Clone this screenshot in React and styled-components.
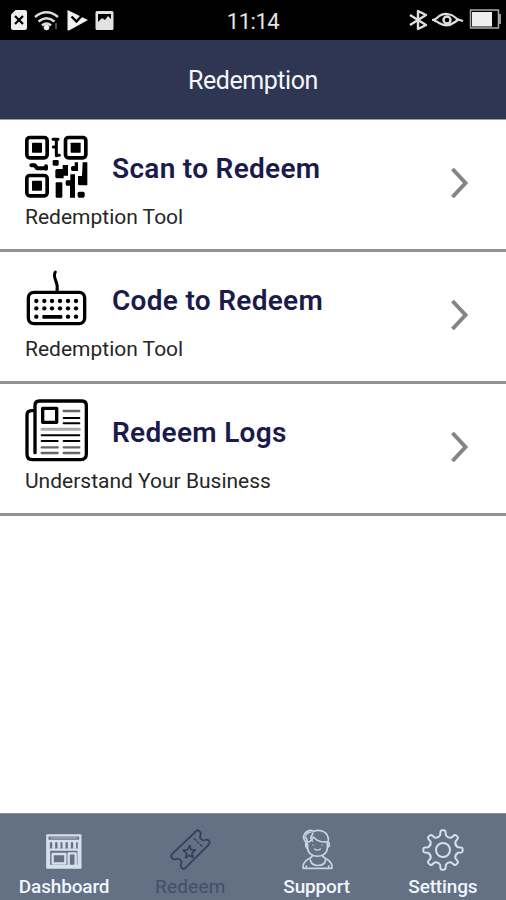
import styled, { createGlobalStyle, ThemeProvider } from 'styled-components'

const theme = {
    font: "Roboto, 'Liberation Sans', sans-serif",
    colors: {
        navy: '#2f3653',
        title: '#1a1b4b',
        tabBar: '#647083',
        tabIcon: '#d5dfed',
        tabActive: '#344060',
        line: '#929294'
    }
}

const GlobalStyle = createGlobalStyle`
    * {
        box-sizing: border-box;
    }

    body {
        margin: 0;
        background-color: #fff;
        font-family: ${theme.font};
    }
`

const Screen = styled.div`
    height: 100vh;
    min-height: 900px;
    display: flex;
    flex-direction: column;
    background-color: #fff;
`

const StatusBar = styled.div`
    height: 40px;
    flex: none;
    display: grid;
    grid-template-columns: 1fr auto 1fr;
    background-color: #000;
    color: #e4e4e4;
`

const StatusIcons = styled.svg`
    display: block;
    height: 40px;
    justify-self: ${({ $end }) => ($end ? 'end' : 'start')};
`

const Clock = styled.span`
    font-size: 22px;
    line-height: 43px;
    letter-spacing: -0.5px;
`

const Header = styled.header`
    height: 80px;
    flex: none;
    padding-top: 1px;
    background-color: ${({ theme }) => theme.colors.navy};
    border-bottom: 1px solid #9a9dab;
    text-align: center;
`

const HeaderTitle = styled.h1`
    margin: 0;
    color: #f4f6fc;
    font-size: 25px;
    font-weight: 400;
    line-height: 80px;
    letter-spacing: -0.45px;
`

const List = styled.main`
    flex: 1;
`

const Row = styled.section`
    height: 132px;
    display: flex;
    align-items: center;
    padding: 0 36px 0 25px;
    border-bottom: 3px solid ${({ theme }) => theme.colors.line};
`

const RowBody = styled.div`
    flex: 1;
    align-self: stretch;
    padding-top: 15px;
`

const RowHeading = styled.div`
    height: 64px;
    display: flex;
    gap: 23px;
`

const RowIcon = styled.svg`
    width: 64px;
    height: 64px;
    flex: none;
`

const RowTitle = styled.h2`
    margin: 0;
    color: ${({ theme }) => theme.colors.title};
    font-size: 28px;
    font-weight: 600;
    line-height: 68px;
    letter-spacing: 0.3px;
    white-space: nowrap;
`

const RowText = styled.p`
    margin: 3px 0 0;
    color: #262626;
    font-size: 21px;
    line-height: 30px;
`

const Arrow = styled.svg`
    width: 20px;
    height: 36px;
    margin-bottom: 3px;
`

const TabBar = styled.nav`
    height: 87px;
    flex: none;
    display: grid;
    grid-template-columns: repeat(4, 1fr);
    padding-left: 1px;
    background-color: ${({ theme }) => theme.colors.tabBar};
    border-top: 1px solid #8a919c;
`

const Tab = styled.div`
    display: flex;
    flex-direction: column;
    align-items: center;
    padding-top: 14px;
    color: ${({ $active, theme }) => ($active ? theme.colors.tabActive : theme.colors.tabIcon)};
`

const TabIcon = styled.svg`
    width: 44px;
    height: 44px;
    fill: none;
    stroke: currentColor;
    stroke-linecap: round;
    stroke-linejoin: round;
`

const TabLabel = styled.span`
    color: ${({ $active }) => ($active ? '#434e69' : '#f0f5fd')};
    font-size: 19px;
    line-height: 30px;
    letter-spacing: ${({ $active }) => ($active ? '0.2px' : '-0.15px')};
    font-weight: ${({ $active }) => ($active ? 400 : 500)};
`

const Finder = ({ x, y }) => (
    <g>
        <rect x={x + 5.5} y={y + 5.5} width="61" height="61" rx="9" fill="none" stroke="#000" strokeWidth="11" />
        <rect x={x + 21} y={y + 21} width="30" height="30" rx="2" />
    </g>
)

const QrIcon = () => (
    <RowIcon viewBox="30 30 192 192">
        <Finder x={30} y={32} />
        <Finder x={146} y={32} />
        <Finder x={30} y={146} />
        <g stroke="#000" strokeLinejoin="round" strokeLinecap="round" fill="none">
            <path strokeWidth="9" d="M114 43h15M124 43v49M115 66h8M124 91h9" />
            <path strokeWidth="12" d="M49 121h10l8 9h26M93 124v7" />
        </g>
        <rect x="113" y="105" width="18" height="17" rx="4" />
        <path d="M143 120h16v32h-13v8h-20q-5 0-5-5v-18q0-5 5-5h17z" />
        <path d="M179 112h10v26h-16q-5 0-5-5v-5q0-5 5-5h6z" />
        <path d="M203 112h14v69h-24q-4 0-4-4v-24h12z" />
        <rect x="122" y="172" width="20" height="46" rx="3" />
        <path d="M166 148h14v70h-15v-36h-9q-4 0-4-4v-8q0-4 4-4h10z" />
        <rect x="188" y="200" width="21" height="18" rx="5" />
    </RowIcon>
)

const KeyboardIcon = () => (
    <RowIcon viewBox="30 15 192 192">
        <rect x="40" y="91" width="169" height="94" rx="17" fill="none" stroke="#000" strokeWidth="10" />
        <path d="M121 30c-11 18 11 27 5 57" fill="none" stroke="#000" strokeWidth="9" strokeLinecap="round" />
        {[117, 139].map(y => [64, 88, 111, 135, 159, 183].map(x => (
            <circle key={`${x}-${y}`} cx={x} cy={y} r="6.5" />
        )))}
        {[64, 159, 183].map(x => <circle key={x} cx={x} cy="164" r="6.5" />)}
        <rect x="82" y="159" width="60" height="11" rx="3" />
    </RowIcon>
)

const NewsIcon = () => (
    <RowIcon viewBox="30 27 192 192">
        <g fill="none" stroke="#000" strokeLinecap="round" strokeLinejoin="round">
            <path strokeWidth="10" d="M60 188V46q0-13 13-13h128q13 0 13 13v146q0 17-17 17H52q-16 0-16-16V76q0-14 14-14h9" />
            <rect x="83" y="55" width="42" height="42" strokeWidth="10" />
            <path strokeWidth="6" d="M146 84h47M146 100h47M80 136h113M80 153h48M146 153h47" />
            <path strokeWidth="7" stroke="#666" d="M146 63h47M80 172h48M146 172h47M80 189h48M146 189h47" />
            <path strokeWidth="9" stroke="#aaa" d="M81 118h112" />
        </g>
    </RowIcon>
)

const StoreIcon = () => (
    <TabIcon viewBox="0 0 132 132">
        <path strokeWidth="7" d="M16 22h99v97H16zM16 39h99M16 65h99" />
        <path strokeWidth="4" d="M27 30h78" opacity=".5" />
        <path strokeWidth="9" strokeLinecap="butt" d="M19 42v20M35 42v20M51 42v20M66 42v20M82 42v20M98 42v20M112 42v20" />
        <path strokeWidth="7" d="M21 69v47M110 69v47M32 78h38v28H32zM80 116V76h21v40M17 114h97" />
    </TabIcon>
)

const TicketIcon = () => (
    <TabIcon viewBox="0 0 132 132">
        <path strokeWidth="5.500" d="M85 9q4-4 8 0l5 5q1 4-1 8c-4 8 6 18 14 14q5-3 9 0l4 5q3 4-1 8L51 121q-4 4-8 0l-4-5q-3-4 0-8c5-8-5-19-13-15q-6 3-10 0l-6-6q-3-4 1-8z" />
        <path strokeWidth="5.500" d="m65 53 4 12 13 1-10 9 3 13-11-6-11 7 3-13-10-9 13-2z" />
        <path strokeWidth="4" strokeDasharray="7 6" d="m79 32 23 23" />
    </TabIcon>
)

const SupportIcon = () => (
    <TabIcon viewBox="0 0 132 132">
        <g strokeWidth="5" opacity=".9">
            <path d="M36 44c-7-3-13-14-9-23 4-11 18-18 29-11 16-7 37 0 42 15 3 7 2 13 1 16-16 3-33-2-44-14-4 9-9 14-19 17" />
            <path d="M33 21q5-8 14-9M30 27q7 5 6 15M54 15l-7 14 5 10" />
            <path d="M36 43v18M37 43c-7 1-7 15 1 15M98 42c7 1 6 16-1 16M38 50v10c0 33 59 33 59 0V42" />
            <path d="M52 82c0 13-25 7-28 33v6h87v-6c-3-26-28-20-28-33M46 96c4 22 42 22 46 0M34 114v7M101 114v7" />
            <path d="M59 63q8 7 17 0" strokeWidth="4" />
            <path d="M52 51h5M79 51h5" strokeWidth="3" opacity=".6" />
        </g>
    </TabIcon>
)

// One tooth with its rounded valley, repeated every 45 degrees around the hub
const GearIcon = () => {
    const point = (radius, degrees) => {
        const angle = degrees * Math.PI / 180
        return `${(66 + radius * Math.sin(angle)).toFixed(1)} ${(66 - radius * Math.cos(angle)).toFixed(1)}`
    }
    const teeth = Array.from({ length: 8 }, (_, i) => {
        const turn = i * 45
        return `${i ? 'L' : 'M'}${point(45, turn - 11)}L${point(55, turn - 8)}Q${point(59, turn - 7)} ${point(59, turn - 3)}L${point(59, turn + 3)}Q${point(59, turn + 7)} ${point(55, turn + 8)}L${point(45, turn + 11)}Q${point(38, turn + 22.5)} ${point(45, turn + 34)}`
    }).join('')

    return (
        <TabIcon viewBox="0 0 132 132">
            <path strokeWidth="6" d={`${teeth}Z`} />
            <circle cx="66" cy="66" r="21" strokeWidth="6" />
        </TabIcon>
    )
}

const rows = [
    { title: 'Scan to Redeem', text: 'Redemption Tool', Icon: QrIcon },
    { title: 'Code to Redeem', text: 'Redemption Tool', Icon: KeyboardIcon },
    { title: 'Redeem Logs', text: 'Understand Your Business', Icon: NewsIcon }
]

const tabs = [
    { label: 'Dashboard', Icon: StoreIcon },
    { label: 'Redeem', Icon: TicketIcon, active: true },
    { label: 'Support', Icon: SupportIcon },
    { label: 'Settings', Icon: GearIcon }
]

const PhoneStatus = () => (
    <StatusBar>
        <StatusIcons width="120" viewBox="0 0 120 40">
            <path fill="#ededed" d="M15.5 10H25q2 0 2 2v16q0 2-2 2H13q-2 0-2-2V14.5z" />
            <path stroke="#000" strokeWidth="2.2" d="m15 16 8 8m0-8-8 8" />
            <g fill="none" stroke="#ddd" strokeWidth="2.4">
                <path d="M35 17q11.5-9.5 23 0M38.500 21.500q8-6.500 16 0M42 25.500q4.500-4 9 0" />
            </g>
            <circle cx="46.5" cy="27.5" r="2.8" fill="#eee" />
            <path stroke="#666" strokeWidth="1.5" d="M56 23v6" />
            <path fill="#f2f2f2" d="M67.500 10 88 20 69 30.500q-1.500.3-1.500-1z" />
            <path fill="none" stroke="#000" strokeWidth="2.4" d="m71.500 16.500 5 5 9-10" />
            <path fill="#e2e2e2" fillRule="evenodd" d="M97 11h15q1.500 0 1.500 1.500v16q0 1.500-1.500 1.500H97q-1.500 0-1.500-1.500v-16Q95.500 11 97 11zm1 3v8l4-4 3 2 3-4 3 3v-5z" />
        </StatusIcons>
        <Clock>11:14</Clock>
        <StatusIcons $end width="106" viewBox="0 0 106 40">
            <g fill="none" stroke="#dedede" strokeLinejoin="round">
                <path strokeWidth="2.4" d="m10 15 16 10-8 4V11l8 4-16 10" />
                <path strokeWidth="2.2" d="M32 20q3 0 5-2c6-6 14-5 20 1q2 1 6 2M34 21q3 0 5 2 8 5 16-1l4-3" />
                <circle cx="47" cy="20" r="3.5" strokeWidth="2.4" />
                <rect x="70.5" y="10" width="28" height="18" strokeWidth="1.5" stroke="#aaa" />
            </g>
            <rect x="72" y="12" width="20" height="14.5" fill="#eee" />
            <path fill="#999" d="M99 14h2v10h-2z" />
        </StatusIcons>
    </StatusBar>
)

const MenuRow = ({ title, text, Icon }) => (
    <Row>
        <RowBody>
            <RowHeading>
                <Icon />
                <RowTitle>{title}</RowTitle>
            </RowHeading>
            <RowText>{text}</RowText>
        </RowBody>
        <Arrow viewBox="0 0 20 36">
            <path d="m2.500 4 13 14-13 14" fill="none" stroke="#858585" strokeWidth="4" />
        </Arrow>
    </Row>
)

const App = () => {
    return (
        <ThemeProvider theme={theme}>
            <GlobalStyle />
            <Screen>
                <PhoneStatus />
                <Header>
                    <HeaderTitle>Redemption</HeaderTitle>
                </Header>
                <List>
                    {rows.map(row => <MenuRow key={row.title} {...row} />)}
                </List>
                <TabBar>
                    {tabs.map(({ label, Icon, active }) => (
                        <Tab key={label} $active={active}>
                            <Icon />
                            <TabLabel $active={active}>{label}</TabLabel>
                        </Tab>
                    ))}
                </TabBar>
            </Screen>
        </ThemeProvider>
    )
}

export default App
